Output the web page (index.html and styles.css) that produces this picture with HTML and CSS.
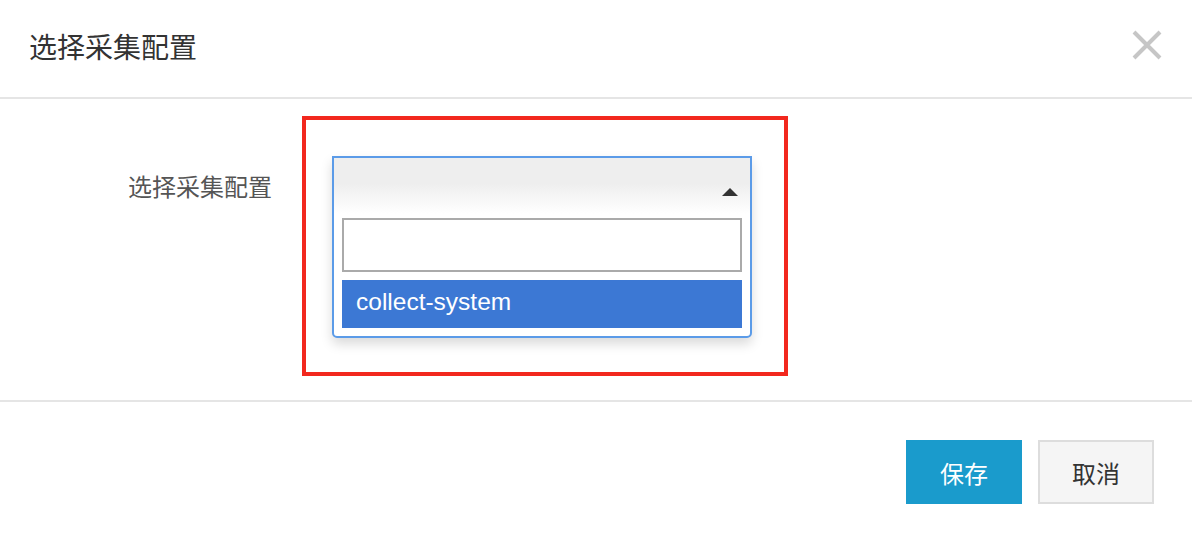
FILE: index.html
```html
<!DOCTYPE html>
<html lang="zh-CN">
<head>
  <meta charset="UTF-8" />
  <title>选择采集配置</title>
  <link rel="stylesheet" href="styles.css">
</head>
<body>
  <div class="modal">
    <div class="modal-header">
      <h3 class="modal-title">选择采集配置</h3>
      <button class="close" type="button" aria-label="关闭">
        <svg width="30" height="30" viewBox="0 0 30 30">
          <path d="M2 2 L28 28 M28 2 L2 28" stroke="#c6c6c6" stroke-width="4" fill="none"/>
        </svg>
      </button>
    </div>

    <div class="modal-body">
      <label class="field-label">选择采集配置</label>
      <div class="highlight">
        <div class="chosen">
          <div class="chosen-single">
            <span class="arrow"></span>
          </div>
          <div class="chosen-drop">
            <input class="chosen-search" type="text">
            <ul class="chosen-results">
              <li class="result active">collect-system</li>
            </ul>
          </div>
        </div>
      </div>
    </div>

    <div class="modal-footer">
      <button class="btn btn-primary" type="button">保存</button>
      <button class="btn btn-default" type="button">取消</button>
    </div>
  </div>
</body>
</html>
```

FILE: styles.css
```css
body {
  margin: 0;
  background: #ffffff;
  font-family: "Liberation Sans", "Noto Sans CJK SC", sans-serif;
  color: #333;
}
.modal {
  width: 1192px;
}
.modal-header {
  height: 97px;
  border-bottom: 2px solid #e5e5e5;
  display: flex;
  align-items: center;
  justify-content: space-between;
  padding: 0 29px 0 29px;
  box-sizing: content-box;
}
.modal-title {
  margin: 0;
  font-family: "Noto Sans CJK SC", sans-serif;
  font-weight: normal;
  font-size: 28px;
  line-height: 40px;
  color: #333;
  margin-top: -6px;
}
.close {
  border: none;
  background: none;
  padding: 0;
  width: 30px;
  height: 30px;
  margin-right: 1px;
  margin-top: -7px;
  cursor: pointer;
}
.close svg {
  display: block;
}
.modal-body {
  display: flex;
  align-items: flex-start;
  padding: 17px 0 24px 128px;
  border-bottom: 2px solid #e5e5e5;
}
.field-label {
  font-family: "Noto Sans CJK SC", sans-serif;
  font-size: 24px;
  line-height: 32px;
  color: #555;
  margin-top: 54px;
  width: 174px;
}
.highlight {
  width: 478px;
  height: 252px;
  border: 4px solid #f2281e;
  padding: 36px 0 0 26px;
  box-sizing: border-box;
  width: 486px;
  height: 260px;
}
.chosen {
  width: 420px;
  border: 2px solid #5b9be8;
  border-radius: 0 0 5px 5px;
  box-sizing: border-box;
  background: #fff;
  box-shadow: 0 6px 12px rgba(0, 0, 0, 0.15);
}
.chosen-single {
  height: 44px;
  padding-top: 12px;
  padding-right: 12px;
  display: flex;
  align-items: center;
  justify-content: flex-end;
  background: linear-gradient(to bottom, #eeeeee 0%, #eeeeee 45%, #ffffff 100%);
}
.arrow {
  width: 0;
  height: 0;
  border-left: 8px solid transparent;
  border-right: 8px solid transparent;
  border-bottom: 8px solid #333;
}
.chosen-drop {
  padding: 4px 8px 8px 8px;
}
.chosen-search {
  display: block;
  width: 400px;
  height: 54px;
  box-sizing: border-box;
  border: 2px solid #aaa;
  margin: 0;
  padding: 0 10px;
  outline: none;
  font-size: 24px;
}
.chosen-results {
  list-style: none;
  margin: 8px 0 0 0;
  padding: 0;
}
.result {
  height: 48px;
  line-height: 44px;
  padding-left: 14px;
  font-size: 24.5px;
  color: #fff;
}
.result.active {
  background: #3c78d4;
}
.modal-footer {
  display: flex;
  justify-content: flex-end;
  gap: 16px;
  padding: 38px 38px 0 0;
}
.btn {
  width: 116px;
  height: 64px;
  font-family: "Noto Sans CJK SC", sans-serif;
  font-size: 24px;
  border: 2px solid transparent;
  box-sizing: border-box;
  cursor: pointer;
}
.btn-primary {
  background: #1a9bcc;
  border-color: #1a9bcc;
  color: #fff;
}
.btn-default {
  background: #f5f5f5;
  border-color: #ddd;
  color: #333;
}
```
